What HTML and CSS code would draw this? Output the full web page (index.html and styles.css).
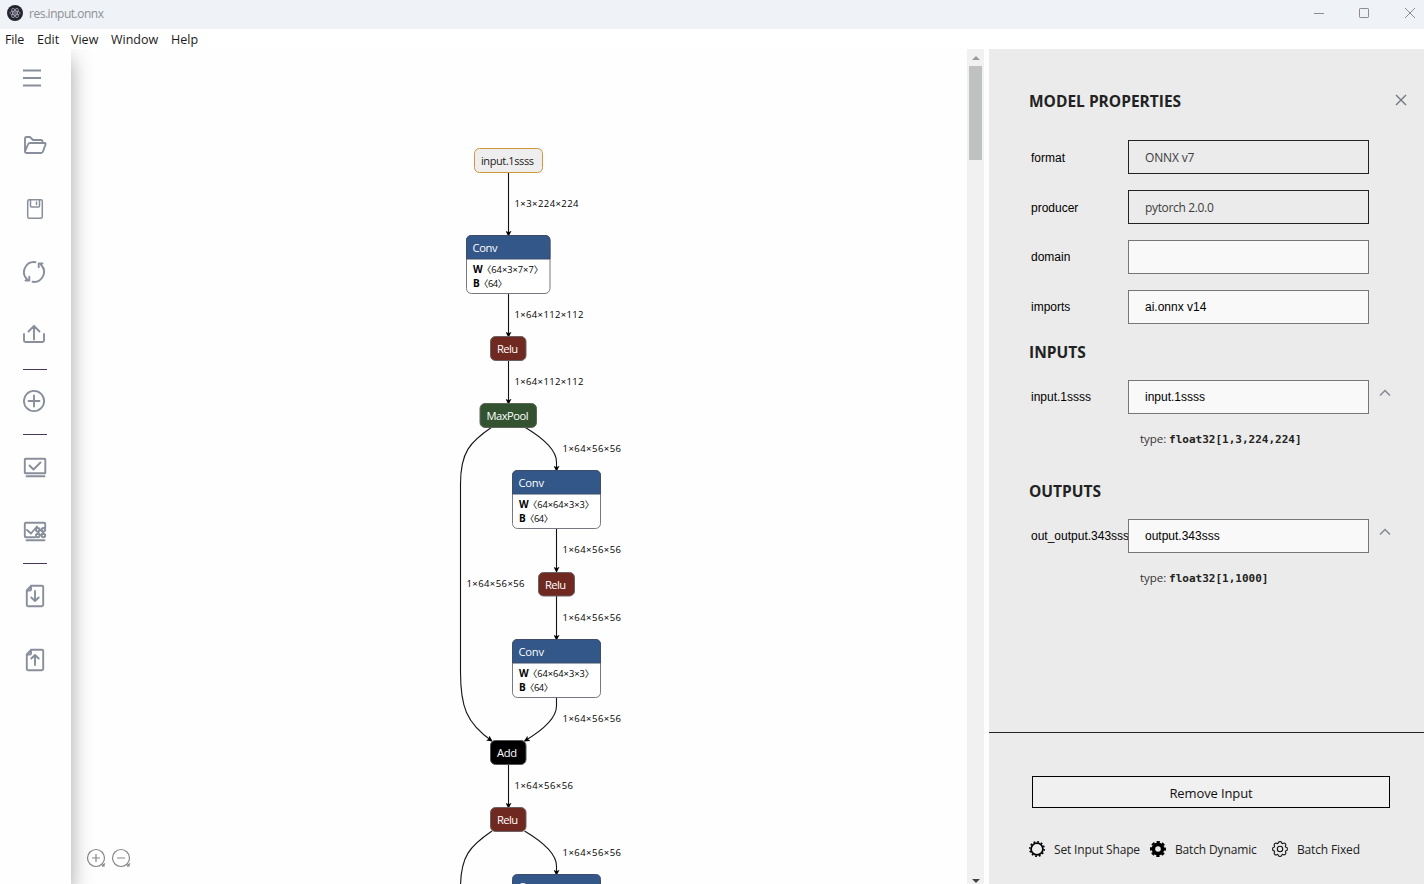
FILE: index.html
```html
<!DOCTYPE html>
<html lang="en">
<head>
<meta charset="utf-8">
<title>res.input.onnx</title>
<link rel="stylesheet" href="styles.css">
</head>
<body>
<header class="titlebar">
  <svg class="app-icon" viewBox="0 0 16 16"><circle cx="8" cy="8" r="8" fill="#25242f"/><g fill="none" stroke="#a9a9bb" stroke-width=".8"><ellipse cx="8" cy="8" rx="5.2" ry="2" transform="rotate(60 8 8)"/><ellipse cx="8" cy="8" rx="5.2" ry="2" transform="rotate(-60 8 8)"/><ellipse cx="8" cy="8" rx="5.2" ry="2"/></g><circle cx="8" cy="8" r=".8" fill="#c5c5d5"/></svg>
  <span class="app-title">res.input.onnx</span>
  <div class="window-controls">
    <svg viewBox="0 0 12 12"><path d="M1 6.500h10"/></svg>
    <svg viewBox="0 0 12 12"><rect x="1.500" y="1.500" width="9" height="9" rx=".6"/></svg>
    <svg viewBox="0 0 12 12"><path d="M1 1l10 10M11 1L1 11"/></svg>
  </div>
</header>
<nav class="menubar"><span class="m-file">File</span><span class="m-edit">Edit</span><span class="m-view">View</span><span class="m-window">Window</span><span class="m-help">Help</span></nav>
<div class="workspace">
  <aside class="toolbar">
    <svg class="tool menu" viewBox="0 0 24 24"><path d="M0 4.500h18M0 12h18M0 19.500h18"/></svg>
    <svg class="tool gap-43" viewBox="0 0 24 24"><path d="M2 19V5.500Q2 4 3.500 4H7l3 3h8q1.500 0 1.500 1.500V10M2 18.500L5 11.500Q5.500 10 7 10h14.500q1.500 0 1 1.500l-2.500 7q-.5 1.500-2 1.500H3.500Q2 20 2 18.500z"/></svg>
    <svg class="tool gap-40 thin" viewBox="0 0 24 24"><rect x="4.700" y="2.700" width="14.600" height="18.600" rx="1.500"/><path d="M7.500 3v6q0 1 1 1h7q1 0 1-1V3M13.500 5v2.500"/></svg>
    <svg class="tool gap-39" viewBox="0 0 24 24"><path d="M12.500 2.200A10 10 0 0 0 4 19.200M9.500 21.800A10 10 0 0 0 18 4.800M2.500 20.500h3.800v-3.800M19.500 3.500h-3.800v3.800"/></svg>
    <svg class="tool gap-38" viewBox="0 0 24 24"><path d="M1 12v6.500q0 1.500 1.500 1.500h17q1.500 0 1.500-1.500V12M11 17.500V4M5.500 9.500L11 3.800l5.500 5.700"/></svg>
    <div class="rule gap-23"></div>
    <svg class="tool gap-19" viewBox="0 0 24 24"><circle cx="11" cy="12" r="10.100"/><path d="M5.500 12h11M11 6.500v11"/></svg>
    <div class="rule gap-21"></div>
    <svg class="tool gap-20" viewBox="0 0 24 24"><rect x="1.800" y="3.800" width="20.500" height="14.500" rx=".6"/><path d="M3.500 21.300h18M6.500 10.500l4 4 7-7"/></svg>
    <svg class="tool gap-40" viewBox="0 0 24 24"><path d="M22.200 9V4.800q0-1-1-1H2.800q-1 0-1 1v12.500q0 1 1 1H12M3.500 21.300h18M4 11l4 3.500 6-7"/><circle cx="14.800" cy="10.800" r="1.800"/><circle cx="20.400" cy="10.800" r="1.800"/><circle cx="14.800" cy="16.500" r="1.800"/><circle cx="20.400" cy="16.500" r="1.800"/><circle cx="17.600" cy="13.600" r="2.300"/></svg>
    <div class="rule gap-20"></div>
    <svg class="tool gap-20" viewBox="0 0 24 24"><path d="M8 1.800H19q1.200 0 1.200 1.200v18q0 1.200-1.200 1.200H5q-1.200 0-1.200-1.200V6.500zV5.500q0 1-1 1H4.500M12 7v10M8.300 13.500l3.700 3.500 3.700-3.500"/></svg>
    <svg class="tool gap-40" viewBox="0 0 24 24"><path d="M8 1.800H19q1.200 0 1.200 1.200v18q0 1.200-1.200 1.200H5q-1.200 0-1.200-1.200V6.500zV5.500q0 1-1 1H4.500M12 17V7M8.300 10.500L12 7l3.700 3.500"/></svg>
  </aside>
  <main class="canvas">
    <svg class="graph" viewBox="71 49 896 835">
      <defs><marker id="arrow" viewBox="0 0 8 8" refX="7" refY="4" markerWidth="6" markerHeight="6" markerUnits="userSpaceOnUse" orient="auto"><path d="M0 0L8 4L0 8L2 4z"/></marker></defs>
      <g class="edge">
        <path d="M508.500 173V236"/><path d="M508.500 294V337"/><path d="M508.500 361V404"/>
        <path d="M524.500 427Q556.500 446 556.500 462V471"/>
        <path d="M492 427C470 442 460.500 452 460.500 484V672C460.500 706 466 723 492 741"/>
        <path d="M556.500 529V572"/><path d="M556.500 596V640"/>
        <path d="M556.500 698V706Q556.500 722 524.500 741"/>
        <path d="M508.500 765V808"/>
        <path d="M524.500 831Q556.500 850 556.500 866V875"/>
        <path class="no-arrow" d="M492 831C470 846 460.500 856 460.500 888"/>
      </g>
      <g class="edge-label">
        <text x="514.500" y="207" textLength="64">1×3×224×224</text>
        <text x="514.500" y="318" textLength="69">1×64×112×112</text>
        <text x="514.500" y="385" textLength="69">1×64×112×112</text>
        <text x="562.500" y="452" textLength="58.500">1×64×56×56</text>
        <text x="562.500" y="553" textLength="58.500">1×64×56×56</text>
        <text x="466.500" y="587" textLength="58">1×64×56×56</text>
        <text x="562.500" y="621" textLength="58.500">1×64×56×56</text>
        <text x="562.500" y="722" textLength="58.500">1×64×56×56</text>
        <text x="514.500" y="789" textLength="58.500">1×64×56×56</text>
        <text x="562.500" y="856" textLength="58.500">1×64×56×56</text>
      </g>
      <rect class="input-node" x="474.500" y="148.500" width="68" height="24" rx="5"/>
      <text class="input-name" x="481" y="165" textLength="53">input.1ssss</text>
      <g transform="translate(466 235)">
        <rect class="conv-body" x=".5" y=".5" width="83.500" height="58" rx="5"/>
        <path class="conv-head" d="M.5 24V5.500Q.5.500 5.500.500H79Q84 .500 84 5.500V24z"/>
        <text class="node-name" x="6.500" y="17" textLength="25">Conv</text>
        <text class="param" x="7" y="38"><tspan class="b">W</tspan></text><text class="param" x="16" y="38" textLength="61">〈64×3×7×7〉</text>
        <text class="param" x="7" y="52"><tspan class="b">B</tspan></text><text class="param" x="13" y="52" textLength="28">〈64〉</text>
      </g>
      <g transform="translate(512 470)">
        <rect class="conv-body" x=".5" y=".5" width="88" height="58" rx="5"/>
        <path class="conv-head" d="M.5 24V5.500Q.5.500 5.500.500H83.500Q88.500.500 88.500 5.500V24z"/>
        <text class="node-name" x="6.500" y="17" textLength="25.500">Conv</text>
        <text class="param" x="7" y="38"><tspan class="b">W</tspan></text><text class="param" x="16" y="38" textLength="66">〈64×64×3×3〉</text>
        <text class="param" x="7" y="52"><tspan class="b">B</tspan></text><text class="param" x="13" y="52" textLength="28">〈64〉</text>
      </g>
      <g transform="translate(512 639)">
        <rect class="conv-body" x=".5" y=".5" width="88" height="58" rx="5"/>
        <path class="conv-head" d="M.5 24V5.500Q.5.500 5.500.500H83.500Q88.500.500 88.500 5.500V24z"/>
        <text class="node-name" x="6.500" y="17" textLength="25.500">Conv</text>
        <text class="param" x="7" y="38"><tspan class="b">W</tspan></text><text class="param" x="16" y="38" textLength="66">〈64×64×3×3〉</text>
        <text class="param" x="7" y="52"><tspan class="b">B</tspan></text><text class="param" x="13" y="52" textLength="28">〈64〉</text>
      </g>
      <g transform="translate(512 874)">
        <path class="conv-head" d="M.5 24V5.500Q.5.500 5.500.500H83.500Q88.500.500 88.500 5.500V24z"/>
        <text class="node-name" x="6.500" y="17" textLength="25.500">Conv</text>
      </g>
      <rect class="relu" x="490.500" y="336.500" width="35.500" height="24" rx="5"/><text class="node-name" x="497" y="353" textLength="21">Relu</text>
      <rect class="pool" x="480" y="403.500" width="56.500" height="24" rx="5"/><text class="node-name" x="486.500" y="420" textLength="42">MaxPool</text>
      <rect class="relu" x="538.500" y="572.500" width="36" height="23.500" rx="5"/><text class="node-name" x="545" y="589" textLength="21">Relu</text>
      <rect class="add" x="490.500" y="740.500" width="35.500" height="24" rx="5"/><text class="node-name" x="497" y="757" textLength="20">Add</text>
      <rect class="relu" x="490.500" y="807.500" width="35.500" height="24" rx="5"/><text class="node-name" x="497" y="824" textLength="21">Relu</text>
      <g class="zoom"><circle cx="96" cy="858" r="8.500"/><path d="M92 858h8M96 854v8M102.500 864.500l2 2M102 866.500l3-3"/><circle cx="121" cy="858" r="8.500"/><path d="M117 858h8M127.500 864.500l2 2M127 866.500l3-3"/></g>
    </svg>
  </main>
  <div class="scrollbar"><i class="arrow-up"></i><div class="thumb"></div><i class="arrow-down"></i></div>
  <section class="panel">
    <div class="properties">
      <div class="panel-head"><h2>MODEL PROPERTIES</h2><svg class="close" viewBox="0 0 12 12"><path d="M1 1l10 10M11 1L1 11"/></svg></div>
      <div class="row"><label>format</label><div class="field readonly"><span class="f-format">ONNX v7</span></div></div>
      <div class="row"><label>producer</label><div class="field readonly"><span class="f-producer">pytorch 2.0.0</span></div></div>
      <div class="row"><label class="up">domain</label><div class="field"></div></div>
      <div class="row"><label class="up">imports</label><div class="field">ai.onnx v14</div></div>
      <h2 class="section">INPUTS</h2>
      <div class="row"><label class="up">input.1ssss</label><div class="field">input.1ssss</div><svg class="chevron" viewBox="0 0 12 8"><path d="M1 6.500L6 1.500l5 5"/></svg></div>
      <p class="type">type: <b>float32[1,3,224,224]</b></p>
      <h2 class="section outputs">OUTPUTS</h2>
      <div class="row"><label class="up">out_output.343sss</label><div class="field">output.343sss</div><svg class="chevron" viewBox="0 0 12 8"><path d="M1 6.500L6 1.500l5 5"/></svg></div>
      <p class="type">type: <b>float32[1,1000]</b></p>
    </div>
    <footer class="actions">
      <button class="remove">Remove Input</button>
      <div class="links">
        <span class="link l1"><svg viewBox="0 0 16 16"><circle cx="8" cy="8" r="5.900" fill="none" stroke="#000" stroke-width="1.700"/><circle cx="8" cy="8" r="7.200" fill="none" stroke="#000" stroke-width="1.500" stroke-dasharray="1.800 1.970"/></svg>Set Input Shape</span>
        <span class="link l2"><svg viewBox="0 0 16 16"><circle cx="8" cy="8" r="4.600" fill="none" stroke="#000" stroke-width="3.600"/><circle cx="8" cy="8" r="7" fill="none" stroke="#000" stroke-width="2" stroke-dasharray="3.300 2.198" stroke-dashoffset="1.650"/></svg>Batch Dynamic</span>
        <span class="link l3"><svg viewBox="0 0 16 16"><g fill="none" stroke="#111" stroke-width="1.100"><path d="M6.200 1.800Q6.200.600 8 .6T9.800 1.800Q10 3 11.100 2.400 12.300 1.500 13.300 2.700T13.600 4.900Q12.800 6 14.200 6.200 15.400 6.200 15.400 8T14.200 9.800Q13 10 13.600 11.100 14.500 12.300 13.300 13.300T11.100 13.600Q10 13 9.800 14.200 9.800 15.400 8 15.400T6.200 14.200Q6 13 4.900 13.600 3.700 14.500 2.700 13.300T2.400 11.100Q3 10 1.800 9.800.600 9.800.600 8T1.800 6.200Q3 6 2.400 4.900 1.500 3.700 2.700 2.700T4.900 2.400Q6 3 6.200 1.800z"/><circle cx="8" cy="8" r="2.700"/></g></svg>Batch Fixed</span>
      </div>
    </footer>
  </section>
</div>
</body>
</html>
```
FILE: styles.css
```css
* { box-sizing: border-box; }
body { margin: 0; width: 1424px; height: 884px; overflow: hidden; display: flex; flex-direction: column; background: #fff; font-family: "Open Sans", "Noto Sans", sans-serif; font-size: 12px; color: #222; }
svg { display: block; flex: none; }
.titlebar { flex: 0 0 29px; display: flex; align-items: center; padding: 0 8px 3px 7px; background: #eff3f7; }
.app-icon { width: 16px; height: 16px; }
.app-title { margin-left: 6px; color: #8f8f94; font-size: 12px; letter-spacing: -.48px; line-height: 16px; padding-top: 2px; }
.window-controls { margin-left: auto; display: flex; }
.window-controls svg { width: 12px; height: 12px; margin-left: 33px; fill: none; stroke: #918b91; stroke-width: 1; }
.window-controls svg:last-child { margin-left: 34px; }
.menubar { flex: 0 0 20px; height: 20px; min-height: 0; display: flex; gap: 13px; padding-left: 5px; line-height: 21px; font-size: 12.500px; color: #1b1b1b; }
.menubar span { white-space: nowrap; }
.m-file { width: 19px; letter-spacing: -.15px; } .m-edit { width: 21px; } .m-view { width: 27px; } .m-window { width: 47px; }
.workspace { flex: 1; min-height: 0; display: flex; background: #fefefe; }
.toolbar { flex: 0 0 71px; padding: 17px 0 0 23px; background: #fefefe; z-index: 1; box-shadow: 0 10px 20px rgba(0,0,0,.36); clip-path: inset(0 -30px 0 0); }
.tool { width: 24px; height: 24px; fill: none; stroke: #888f9b; stroke-width: 1.900; stroke-linecap: round; stroke-linejoin: round; }
.thin { stroke-width: 1.500; }
.menu { stroke-width: 2; stroke-linecap: butt; }
.rule { width: 24px; height: 1px; background: #46365a; }
.gap-43 { margin-top: 43px; } .gap-40 { margin-top: 40px; } .gap-39 { margin-top: 39px; } .gap-38 { margin-top: 38px; }
.gap-23 { margin-top: 23px; } .gap-21 { margin-top: 21px; } .gap-20 { margin-top: 20px; } .gap-19 { margin-top: 19px; }
.canvas { flex: 0 0 896px; }
.graph { width: 896px; height: 835px; }
.edge path { fill: none; stroke: #161219; stroke-width: 1.100; marker-end: url(#arrow); }
.edge .no-arrow { marker-end: none; }
#arrow path { stroke: none; fill: #000; marker-end: none; }
.edge-label { font-size: 9.500px; fill: #000; }
.input-node { fill: #eee; stroke: #d0963c; }
.input-name { font-size: 11px; fill: #222; }
.conv-body { fill: #fff; stroke: #77777f; }
.conv-head { fill: #335788; stroke: #3f4c69; stroke-width: 1; }
.node-name { font-size: 11.200px; fill: #fff; }
.param { font-family: "Open Sans", "Noto Sans CJK SC", sans-serif; font-size: 9.300px; fill: #000; }
.b { font-weight: 700; font-size: 10px; }
.relu { fill: #702921; stroke: #6b6062; }
.pool { fill: #335330; stroke: #5a675a; }
.add { fill: #000; stroke: #555; }
.zoom { fill: none; stroke: #85858b; stroke-width: 1.200; }
.scrollbar { flex: 0 0 17px; display: flex; flex-direction: column; align-items: center; background: #f1f1f1; }
.arrow-up { margin: 7px 0 6px; border: 4px solid transparent; border-top: 0; border-bottom: 4px solid #9a9a9f; }
.thumb { width: 13px; height: 94px; background: #c0c2c1; }
.arrow-down { margin: auto 0 1px; border: 4px solid transparent; border-bottom: 0; border-top: 4px solid #4a4050; }
.panel { flex: 1; margin-left: 5px; display: flex; flex-direction: column; background: #ebebeb; }
.properties { flex: 0 0 683px; padding: 40px 17px 0 40px; }
h2 { margin: 0; font-size: 15.500px; line-height: 24px; font-weight: 700; color: #222; letter-spacing: 0; }
.panel-head { display: flex; justify-content: space-between; height: 51px; }
.close { width: 12px; height: 12px; margin-top: 5px; fill: none; stroke: #73767d; stroke-width: 1.400; }
.row { display: flex; height: 34px; margin-bottom: 16px; align-items: center; font-family: "Liberation Sans", sans-serif; color: #000; }
.row label { flex: 0 0 99px; width: 99px; min-width: 0; padding: 1px 0 0 2px; white-space: nowrap; }
.row .up { padding-top: 0; }
.field { width: 241px; height: 34px; border: 1px solid #767676; background: #f9f9f9; padding-left: 16px; line-height: 32px; }
.readonly { border-color: #222; background: #ebebeb; color: #3c3c3c; font-family: "Open Sans", sans-serif; line-height: 34px; }
.f-format { letter-spacing: -.15px; }
.f-producer { letter-spacing: -.34px; }
.chevron { width: 12px; height: 8px; margin: -8px 0 0 10px; fill: none; stroke: #858991; stroke-width: 1.500; }
.section { height: 40px; line-height: 24px; }
.type { margin: 0 0 0 111px; line-height: 18px; height: 18px; white-space: nowrap; color: #333; font-size: 11.500px; letter-spacing: -.05px; }
.type b { font-family: "DejaVu Sans Mono", monospace; font-size: 11px; letter-spacing: 0; color: #222; }
.outputs { margin-top: 31px; }
.actions { flex: 1; border-top: 1px solid #222; padding: 43px 34px 0 43px; }
.remove { display: block; width: 358px; height: 32px; border: 1px solid #000; background: #f0f0f0; color: #111; font: 13px/28px "Open Sans", sans-serif; letter-spacing: -.12px; padding: 1px 0 0; }
.links { display: flex; margin: 33px 0 0 -3px; height: 16px; }
.link { display: flex; line-height: 18px; white-space: nowrap; color: #222; letter-spacing: -.15px; }
.link svg { width: 16px; height: 16px; margin-right: 9px; }
.l1 { width: 121px; }
.l2 { width: 122px; }
```
